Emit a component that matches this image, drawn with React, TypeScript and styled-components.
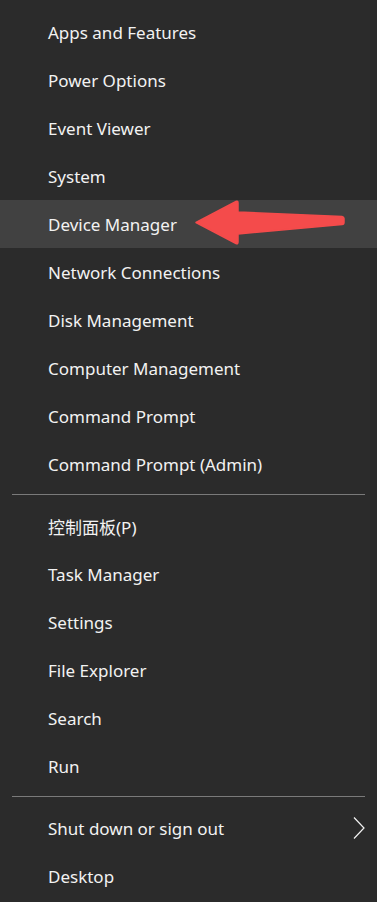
import React from 'react';
import styled, { createGlobalStyle } from 'styled-components';

const GlobalStyle = createGlobalStyle`
  html, body {
    margin: 0;
    padding: 0;
    background: #2b2b2b;
  }
  body {
    font-family: "Noto Sans", "Noto Sans CJK SC", sans-serif;
  }
`;

const Menu = styled.nav`
  width: 377px;
  min-height: 902px;
  box-sizing: border-box;
  padding-top: 8px;
  background: #2b2b2b;
  display: flex;
  flex-direction: column;
`;

const Item = styled.div<{ active?: boolean }>`
  position: relative;
  height: 48px;
  display: flex;
  align-items: center;
  padding-left: 48px;
  padding-right: 12px;
  background: ${p => (p.active ? '#414141' : 'transparent')};
  color: #f2f2f2;
  font-size: 17px;
`;

const Label = styled.span`
  flex: 1;
  white-space: nowrap;
`;

const Divider = styled.div`
  height: 14px;
  display: flex;
  align-items: flex-start;
  padding: 6px 12px 0;
  box-sizing: border-box;

  &::after {
    content: '';
    flex: 1;
    height: 1px;
    background: #7a7a7a;
  }
`;

const Pointer = styled.svg`
  position: absolute;
  left: 192px;
  top: -2px;
  width: 156px;
  height: 50px;
  pointer-events: none;
`;

const Chevron = styled.svg`
  width: 14px;
  height: 24px;
  margin-right: -1px;
`;

const groups: string[][] = [
  [
    'Apps and Features',
    'Power Options',
    'Event Viewer',
    'System',
    'Device Manager',
    'Network Connections',
    'Disk Management',
    'Computer Management',
    'Command Prompt',
    'Command Prompt (Admin)',
  ],
  ['控制面板(P)', 'Task Manager', 'Settings', 'File Explorer', 'Search', 'Run'],
  ['Shut down or sign out', 'Desktop'],
];

const RedArrow = () => (
  // arrow drawn in page coordinates (row top = 200 in the page)
  <Pointer viewBox="192 198 156 50">
    <path
      d="M196 222.5 L236 201.5 Q238 200.5 238 203 L238 212 L342 216.5 Q344 216.8 344 218.5 L344 222.5 Q344 224.3 342 224.5 L238 234 L238 242 Q238 244.5 236 243.5 Z"
      fill="#f44b4b"
      stroke="#f44b4b"
      strokeWidth="1.5"
      strokeLinejoin="round"
    />
  </Pointer>
);

export default function App() {
  return (
    <>
      <GlobalStyle />
      <Menu>
        {groups.map((group, gi) => (
          <React.Fragment key={gi}>
            {gi > 0 && <Divider />}
            {group.map(label => (
              <Item key={label} active={label === 'Device Manager'}>
                <Label>{label}</Label>
                {label === 'Device Manager' && <RedArrow />}
                {label === 'Shut down or sign out' && (
                  <Chevron viewBox="0 0 14 24">
                    <path d="M2 1.5 L12 12 L2 22.5" fill="none" stroke="#f2f2f2" strokeWidth="1.2" />
                  </Chevron>
                )}
              </Item>
            ))}
          </React.Fragment>
        ))}
      </Menu>
    </>
  );
}
